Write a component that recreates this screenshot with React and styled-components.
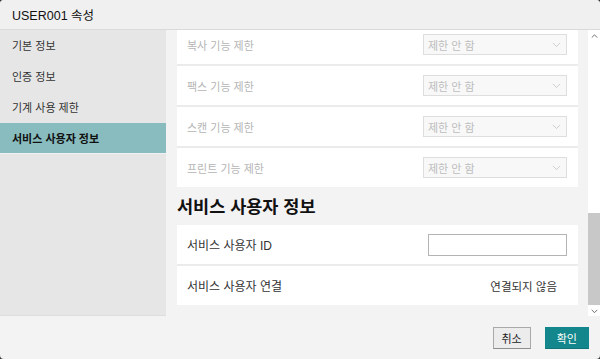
import React from 'react';
import styled, { createGlobalStyle } from 'styled-components';

const GlobalStyle = createGlobalStyle`
  html, body {
    margin: 0;
    padding: 0;
    background: #3a3a3a;
  }
  body {
    font-family: "Liberation Sans", "Noto Sans CJK KR", sans-serif;
    color: #222;
  }
`;

// Dialog frame
const Dialog = styled.div`
  width: 600px;
  height: 359px;
  background: #f3f3f3;
  border-radius: 4px;
  overflow: hidden;
  display: flex;
  flex-direction: column;
`;

const Header = styled.div`
  height: 29px;
  flex: none;
  border-bottom: 1px solid #dadada;
  background: #f0f0f0;
  display: flex;
  align-items: center;
  padding-left: 12px;
  font-size: 12.5px;
  color: #111;
`;

const Body = styled.div`
  flex: 1;
  display: flex;
  min-height: 0;
`;

// Left navigation
const Sidebar = styled.nav`
  width: 166px;
  flex: none;
  background: #e6e6e6;
  border-bottom: 1px solid #dedede;
  display: flex;
  flex-direction: column;
`;

const NavItem = styled.div`
  height: 30px;
  border-bottom: 1px solid ${p => (p.$active ? '#f0f0f0' : '#e6e6e6')};
  display: flex;
  align-items: center;
  padding-left: 12px;
  font-size: 11px;
  color: ${p => (p.$active ? '#111' : '#333')};
  font-weight: ${p => (p.$active ? 'bold' : 'normal')};
  background: ${p => (p.$active ? '#88bcbf' : 'transparent')};
`;

// Scrolled content
const Main = styled.div`
  flex: 1;
  display: flex;
  min-width: 0;
`;

const Content = styled.div`
  flex: 1;
  overflow: hidden;
  padding: 0 10px 0 11px;
`;

const Card = styled.div`
  background: #fff;
  margin-top: ${p => p.$offset || 0}px;
`;

const Row = styled.div`
  height: 39px;
  display: flex;
  align-items: center;
  justify-content: space-between;
  padding: 0 11px 0 10px;
  & + & {
    border-top: 2px solid #ebebeb;
  }
`;

const Label = styled.span`
  font-size: ${p => (p.$disabled ? '11px' : '12px')};
  color: ${p => (p.$disabled ? '#b5b5b5' : '#333')};
`;

const Select = styled.div`
  width: 133px;
  height: 19px;
  border: 1px solid #dedede;
  background: #f8f8f8;
  display: flex;
  align-items: center;
  justify-content: space-between;
  padding: 0 5px 0 4px;
  box-sizing: content-box;
  font-size: 11px;
  color: #bdbdbd;
`;

const TextInput = styled.input`
  width: 135px;
  height: 18px;
  border: 1px solid #b4b4b4;
  padding: 1px;
  margin: 0;
  background: #fff;
  outline: none;
`;

const Value = styled.span`
  font-size: 11.5px;
  color: #333;
  margin-right: 10px;
`;

const SectionTitle = styled.h2`
  margin: 0;
  height: 38px;
  line-height: 40px;
  font-size: 17.5px;
  font-weight: bold;
  color: #111;
`;

// Scrollbar column
const ScrollBar = styled.div`
  width: 12px;
  flex: none;
  background: #fff;
  display: flex;
  flex-direction: column;
`;

const ScrollArrow = styled.div`
  height: 12px;
  flex: none;
  display: flex;
  align-items: center;
  justify-content: center;
`;

const Track = styled.div`
  flex: 1;
  display: flex;
  flex-direction: column;
`;

const Thumb = styled.div`
  margin-top: ${p => p.$top}px;
  height: ${p => p.$height}px;
  background: #c8c8c8;
`;

// Footer
const Footer = styled.div`
  height: 43px;
  flex: none;
  display: flex;
  align-items: center;
  justify-content: flex-end;
  gap: 14px;
  padding-right: 11px;
`;

const Button = styled.button`
  height: 22px;
  padding: 0 ${p => (p.$primary ? '11px' : '8px')};
  margin: 0;
  font-family: inherit;
  font-size: 11px;
  border: 1px solid ${p => (p.$primary ? '#12878b' : '#a9a9a9')};
  border-bottom-color: ${p => (p.$primary ? '#0f7579' : '#8e8e8e')};
  background: ${p => (p.$primary ? '#13878b' : '#ececec')};
  color: ${p => (p.$primary ? '#fff' : '#222')};
  border-radius: 0;
`;

const Chevron = ({ color = '#c9c9c9', up = false, size = 9 }) => (
  <svg width={size} height={size / 2 + 1} viewBox="0 0 10 6">
    <polyline
      points={up ? '1,5 5,1 9,5' : '1,1 5,5 9,1'}
      fill="none"
      stroke={color}
      strokeWidth="1"
    />
  </svg>
);

const navItems = ['기본 정보', '인증 정보', '기계 사용 제한', '서비스 사용자 정보'];
const limits = ['복사 기능 제한', '팩스 기능 제한', '스캔 기능 제한', '프린트 기능 제한'];

export default function App() {
  return (
    <>
      <GlobalStyle />
      <Dialog>
        <Header>USER001 속성</Header>
        <Body>
          <Sidebar>
            {navItems.map((item, i) => (
              <NavItem key={item} $active={i === navItems.length - 1}>
                {item}
              </NavItem>
            ))}
          </Sidebar>
          <Main>
            <Content>
              <Card $offset={-5}>
                {limits.map(label => (
                  <Row key={label}>
                    <Label $disabled>{label}</Label>
                    <Select>
                      <span>제한 안 함</span>
                      <Chevron />
                    </Select>
                  </Row>
                ))}
              </Card>
              <SectionTitle>서비스 사용자 정보</SectionTitle>
              <Card>
                <Row>
                  <Label>서비스 사용자 ID</Label>
                  <TextInput type="text" />
                </Row>
                <Row>
                  <Label>서비스 사용자 연결</Label>
                  <Value>연결되지 않음</Value>
                </Row>
              </Card>
            </Content>
            <ScrollBar>
              <ScrollArrow>
                <Chevron up color="#333" size={7} />
              </ScrollArrow>
              <Track>
                <Thumb $top={171} $height={92} />
              </Track>
              <ScrollArrow>
                <Chevron color="#333" size={7} />
              </ScrollArrow>
            </ScrollBar>
          </Main>
        </Body>
        <Footer>
          <Button>취소</Button>
          <Button $primary>확인</Button>
        </Footer>
      </Dialog>
    </>
  );
}
